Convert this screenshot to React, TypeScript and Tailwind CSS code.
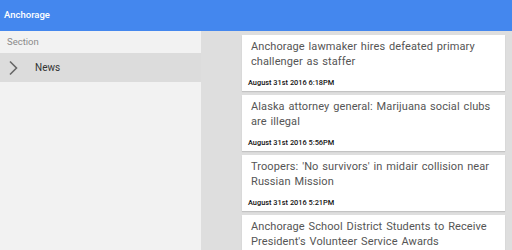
import React from 'react';

const stories = [
  { title: 'Anchorage lawmaker hires defeated primary challenger as staffer', date: 'August 31st 2016 6:18PM' },
  { title: 'Alaska attorney general: Marijuana social clubs are illegal', date: 'August 31st 2016 5:56PM' },
  { title: "Troopers: 'No survivors' in midair collision near Russian Mission", date: 'August 31st 2016 5:21PM' },
  { title: "Anchorage School District Students to Receive President's Volunteer Service Awards", date: 'August 31st 2016 5:02PM' },
];

export default function App() {
  return (
    <div className="w-[512px] h-[250px] overflow-hidden flex flex-col font-['Roboto',sans-serif] bg-[#dedede]">
      <div className="h-[31px] shrink-0 bg-[#4487ee] flex items-center px-[4px] text-white text-[9.5px] font-medium">
        Anchorage
      </div>
      <div className="flex flex-1 min-h-0">
        {/* sidebar */}
        <div className="w-[201px] shrink-0 bg-[#f2f2f2] flex flex-col">
          <div className="h-[22px] flex items-center px-[7px] text-[9.5px] text-[#8a8a8a]">Section</div>
          <div className="h-[29px] bg-[#dcdcdc] flex items-center">
            <svg className="ml-[8px]" width="10" height="16" viewBox="0 0 10 16" fill="none">
              <path d="M2 1.5 L8.5 8 L2 14.5" stroke="#666" strokeWidth="1.6" />
            </svg>
            <span className="ml-[17px] text-[10px] text-[#333]">News</span>
          </div>
        </div>
        {/* story list */}
        <div className="flex-1 pl-[41px] pr-[7px] pt-[4px] flex flex-col gap-[4px]">
          {stories.map((s) => (
            <div key={s.date} className="bg-white h-[56px] shrink-0 shadow-[0_1px_1px_rgba(0,0,0,0.12)] flex flex-col px-[6px]">
              <div className="pl-[3px] pr-[6px] pt-[4px] text-[11px] leading-[15px] text-[#555] tracking-[0.1px] [word-spacing:1px]">{s.title}</div>
              <div className="mt-auto mb-[3px] text-[7.4px] font-medium text-[#111]">{s.date}</div>
            </div>
          ))}
        </div>
      </div>
    </div>
  );
}
